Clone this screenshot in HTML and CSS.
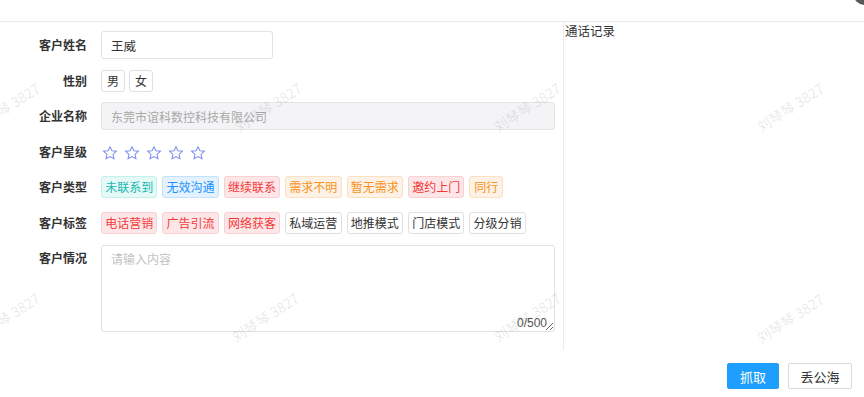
FILE: index.html
```html
<!DOCTYPE html>
<html lang="zh-CN">
<head>
<meta charset="utf-8">
<title>客户详情</title>
<link rel="stylesheet" href="styles.css">
</head>
<body>
<div class="dialog">
  <div class="header"><span class="close-btn"></span></div>
  <div class="content">
    <div class="form">
      <div class="row">
        <label class="label">客户姓名</label>
        <div class="field"><input class="input name" type="text" value="王威"></div>
      </div>
      <div class="row">
        <label class="label">性别</label>
        <div class="field tags">
          <span class="tag plain single">男</span>
          <span class="tag plain single">女</span>
        </div>
      </div>
      <div class="row">
        <label class="label">企业名称</label>
        <div class="field"><input class="input wide" type="text" value="东莞市谊科数控科技有限公司" disabled></div>
      </div>
      <div class="row">
        <label class="label">客户星级</label>
        <div class="field stars">
          <svg class="star" viewBox="0 0 24 24"><path d="M12 2.5l2.9 6.1 6.6.8-4.9 4.6 1.3 6.6L12 17.3l-5.9 3.3 1.3-6.6-4.9-4.6 6.6-.8z"/></svg>
          <svg class="star" viewBox="0 0 24 24"><path d="M12 2.5l2.9 6.1 6.6.8-4.9 4.6 1.3 6.6L12 17.3l-5.9 3.3 1.3-6.6-4.9-4.6 6.6-.8z"/></svg>
          <svg class="star" viewBox="0 0 24 24"><path d="M12 2.5l2.9 6.1 6.6.8-4.9 4.6 1.3 6.6L12 17.3l-5.9 3.3 1.3-6.6-4.9-4.6 6.6-.8z"/></svg>
          <svg class="star" viewBox="0 0 24 24"><path d="M12 2.5l2.9 6.1 6.6.8-4.9 4.6 1.3 6.6L12 17.3l-5.9 3.3 1.3-6.6-4.9-4.6 6.6-.8z"/></svg>
          <svg class="star" viewBox="0 0 24 24"><path d="M12 2.5l2.9 6.1 6.6.8-4.9 4.6 1.3 6.6L12 17.3l-5.9 3.3 1.3-6.6-4.9-4.6 6.6-.8z"/></svg>
        </div>
      </div>
      <div class="row">
        <label class="label">客户类型</label>
        <div class="field tags">
          <span class="tag teal">未联系到</span>
          <span class="tag blue">无效沟通</span>
          <span class="tag red">继续联系</span>
          <span class="tag orange">需求不明</span>
          <span class="tag orange">暂无需求</span>
          <span class="tag red">邀约上门</span>
          <span class="tag orange two">同行</span>
        </div>
      </div>
      <div class="row">
        <label class="label">客户标签</label>
        <div class="field tags">
          <span class="tag red">电话营销</span>
          <span class="tag red">广告引流</span>
          <span class="tag red">网络获客</span>
          <span class="tag plain">私域运营</span>
          <span class="tag plain">地推模式</span>
          <span class="tag plain">门店模式</span>
          <span class="tag plain">分级分销</span>
        </div>
      </div>
      <div class="row row-top">
        <label class="label label-top">客户情况</label>
        <div class="field">
          <div class="textarea-wrap">
            <textarea class="textarea" placeholder="请输入内容"></textarea>
            <span class="counter">0/500</span>
          </div>
        </div>
      </div>
    </div>
    <div class="side">通话记录</div>
  </div>
  <div class="footer">
    <button class="btn primary">抓取</button>
    <button class="btn">丢公海</button>
  </div>

  <div class="watermarks">
    <span class="wm" style="left:6px;top:107px">刘琴琴 3827</span>
    <span class="wm" style="left:268px;top:107px">刘琴琴 3827</span>
    <span class="wm" style="left:527px;top:107px">刘琴琴 3827</span>
    <span class="wm" style="left:790px;top:107px">刘琴琴 3827</span>
    <span class="wm" style="left:6px;top:317px">刘琴琴 3827</span>
    <span class="wm" style="left:265px;top:317px">刘琴琴 3827</span>
    <span class="wm" style="left:527px;top:317px">刘琴琴 3827</span>
    <span class="wm" style="left:790px;top:318px">刘琴琴 3827</span>
  </div>
</div>
</body>
</html>
```

FILE: styles.css
```css
* { box-sizing: border-box; }
html, body {
  margin: 0;
  padding: 0;
  background: #fff;
}
body {
  font-family: "Noto Sans CJK SC", "Noto Sans", "Liberation Sans", sans-serif;
  font-size: 12px;
  color: #333;
  width: 864px;
  height: 397px;
  overflow: hidden;
}
.dialog {
  position: relative;
  width: 864px;
  height: 397px;
}
.header {
  height: 22px;
  border-bottom: 1px solid #ebebeb;
  position: relative;
}
.close-btn {
  position: absolute;
  left: 853px;
  top: -19px;
  width: 24px;
  height: 24px;
  border-radius: 50%;
  background: #5a5a5a;
}
.content {
  display: flex;
  height: 328px;
}
.form {
  width: 564px;
  border-right: 1px solid #ebebeb;
  padding-top: 9px;
  display: flex;
  flex-direction: column;
  gap: 7.5px;
}
.row {
  display: flex;
  align-items: center;
  height: 28px;
}
.row-top {
  align-items: flex-start;
  height: auto;
  margin-top: 0.5px;
}
.label {
  width: 87px;
  text-align: right;
  font-size: 12px;
  font-weight: 700;
  color: #333;
  flex: none;
  line-height: 16px;
}
.label-top {
  padding-top: 5px;
}
.field {
  margin-left: 14px;
  display: flex;
  align-items: center;
}
.input {
  height: 28px;
  border: 1px solid #e2e2e2;
  border-radius: 3px;
  padding: 0 9px;
  font-family: inherit;
  font-size: 12.5px;
  color: #333;
  background: #fff;
  outline: none;
}
.input.name { width: 172px; }
.input.wide {
  width: 454px;
  font-size: 12px;
  background: #f4f4f6;
  color: #a8a8a8;
  -webkit-text-fill-color: #a8a8a8;
  border-color: #e4e4e4;
}
.tags {
  gap: 5px;
}
.tag {
  display: inline-flex;
  align-items: center;
  height: 22px;
  padding: 0 3.2px;
  border: 1px solid;
  border-radius: 3px;
  font-size: 12px;
  line-height: 1;
  white-space: nowrap;
}
.tag.two { padding: 0 4px; }
.tag.single {
  padding: 0 5px;
  margin-right: -1px;
}
.tag.plain { color: #333; background: #fff; border-color: #e0e0e0; }
.tag.teal { color: #19b8b0; background: #e5f9f7; border-color: #c6efeb; }
.tag.blue { color: #1890ff; background: #e4f2ff; border-color: #c4e1fc; }
.tag.red { color: #f33a3a; background: #fde6e7; border-color: #fbd0d2; }
.tag.orange { color: #f7931e; background: #fdf2e5; border-color: #f9e1c4; }
.stars {
  gap: 6px;
  padding-left: 1px;
  margin-top: 2px;
}
.star {
  width: 16px;
  height: 16px;
  fill: none;
  stroke: #7f91f0;
  stroke-width: 1.6;
  stroke-linejoin: miter;
}
.textarea-wrap {
  position: relative;
  width: 454px;
  height: 87px;
}
.textarea {
  display: block;
  width: 454px;
  height: 87px;
  border: 1px solid #e2e2e2;
  border-radius: 3px;
  padding: 5px 9px;
  font-family: inherit;
  font-size: 12px;
  line-height: 16px;
  color: #333;
  resize: vertical;
  outline: none;
}
.textarea::placeholder { color: #c2c2c2; }
.counter {
  position: absolute;
  right: 8px;
  bottom: 2px;
  font-size: 12px;
  color: #555;
  font-family: "Liberation Sans", sans-serif;
}
.side {
  flex: 1;
  padding: 1px 0 0 1px;
  font-size: 12.5px;
  color: #333;
  line-height: 16px;
}
.footer {
  display: flex;
  justify-content: flex-end;
  gap: 9px;
  padding: 13px 12px 0 0;
}
.btn {
  height: 26px;
  padding: 0 12px;
  border: 1px solid #dcdcdc;
  border-radius: 2px;
  background: #fff;
  color: #333;
  font-family: inherit;
  font-size: 13px;
  line-height: 1;
}
.btn.primary {
  background: #1e9ffd;
  border-color: #1e9ffd;
  color: #fff;
  width: 52px;
  padding: 0;
}
.btn:not(.primary) { width: 64px; padding: 0; }
.watermarks {
  position: absolute;
  inset: 0;
  pointer-events: none;
  overflow: hidden;
}
.wm {
  position: absolute;
  transform: translate(-50%, -50%) rotate(-33deg);
  font-size: 14px;
  color: rgba(0, 0, 0, 0.1);
  white-space: nowrap;
  font-family: "Noto Sans CJK SC", sans-serif;
}
```
